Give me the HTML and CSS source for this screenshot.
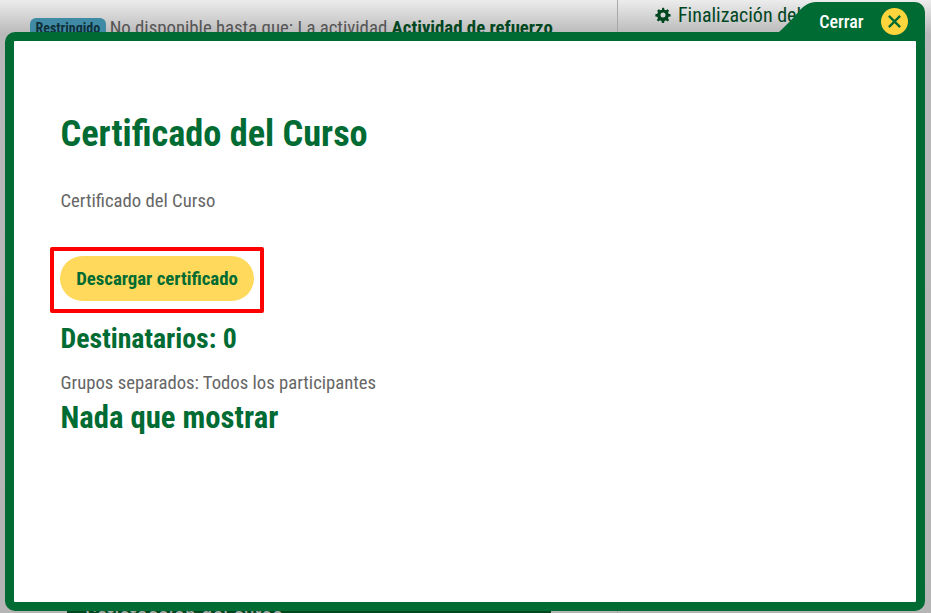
FILE: index.html
```html
<!DOCTYPE html>
<html lang="es">
<head>
  <meta charset="UTF-8" />
  <meta name="viewport" content="width=device-width, initial-scale=1" />
  <title>Certificado del Curso</title>
  <link rel="stylesheet" href="styles.css">
</head>
<body>
  <!-- Page behind the modal -->
  <div class="page">
    <div class="page-main">
      <div class="availability">
        <span class="badge">Restringido</span>
        <span>No disponible hasta que: La actividad <strong>Actividad de refuerzo</strong></span>
      </div>
      <div class="page-footer-bar">Satisfacción del curso</div>
    </div>
    <aside class="page-side">
      <div class="side-title">
        <svg class="gear" viewBox="0 0 24 24" aria-hidden="true"><path d="M13.6 1l.5 3a8.300 8.300 0 0 1 2.300 1l2.500-1.800 2.300 2.300-1.800 2.500c.4.700.8 1.500 1 2.300l3 .5v3.300l-3 .5a8.300 8.300 0 0 1-1 2.300l1.800 2.500-2.300 2.300-2.500-1.800c-.7.4-1.500.8-2.300 1l-.5 3h-3.300l-.5-3a8.300 8.300 0 0 1-2.300-1l-2.500 1.800-2.300-2.300 1.800-2.500a8.300 8.300 0 0 1-1-2.300l-3-.5v-3.300l3-.5c.2-.8.6-1.600 1-2.300L3.300 5.500l2.300-2.300 2.500 1.800c.7-.4 1.500-.8 2.300-1l.5-3zM12 8.200a3.800 3.800 0 1 0 0 7.600 3.800 3.800 0 0 0 0-7.600z" fill-rule="evenodd"/></svg>
        <span>Finalización del curso</span>
      </div>
    </aside>
  </div>

  <!-- Modal -->
  <div class="modal">
    <button class="close-tab">
      <svg class="tab-shape" viewBox="0 0 146 39" aria-hidden="true"><path d="M0 30C8 23 15 15 21 8 25 4 30 0 37 0H136a10 10 0 0 1 10 10V39H0z"/></svg>
      <span class="close-label">Cerrar</span>
      <span class="close-icon">
        <svg viewBox="0 0 16 16" aria-hidden="true"><path d="M2 2l12 12M14 2L2 14"/></svg>
      </span>
    </button>
    <div class="modal-body">
      <h1>Certificado del Curso</h1>
      <p class="intro">Certificado del Curso</p>
      <div class="download-row">
        <a class="download-btn" href="#">Descargar certificado</a>
      </div>
      <h2 class="recipients">Destinatarios: 0</h2>
      <p class="groups">Grupos separados: Todos los participantes</p>
      <h2 class="empty">Nada que mostrar</h2>
    </div>
  </div>
</body>
</html>
```

FILE: styles.css
```css
html, body {
  height: 100%;
}

body {
  margin: 0;
  overflow: hidden;
  font-family: 'Roboto', 'Liberation Sans', sans-serif;
  font-stretch: 75%;
  color: #5f5f5f;
  background-color: #b5b5b5;
}

/* Page behind the modal, runs past the bottom of the window */
.page {
  height: 640px;
  display: flex;
  background: linear-gradient(#ececec 0, #b9b9b9 34px, #b5b5b5 100%);
}

.page-main {
  width: 618px;
  box-sizing: border-box;
  padding: 17px 0 0 30px;
  border-right: 1px solid #a8a8a8;
  display: flex;
  flex-direction: column;
  justify-content: space-between;
}

.availability {
  display: flex;
  align-items: center;
  gap: 4px;
  font-size: 18.800px;
  line-height: 22px;
  color: #555;
}

.availability strong {
  color: #00461f;
}

.badge {
  background-color: #3f8ba6;
  color: #10303a;
  font-size: 14px;
  font-weight: 700;
  line-height: 20px;
  padding: 0 5.500px;
  border-radius: 6px;
}

.page-footer-bar {
  margin-left: 37px;
  width: 484px;
  height: 38px;
  box-sizing: border-box;
  padding: 4px 0 0 18px;
  background-color: #00461f;
  color: #aaa;
  font-size: 22.600px;
  line-height: 20px;
}

.page-side {
  flex: 1;
  padding: 4px 0 0 37px;
}

.side-title {
  display: flex;
  align-items: center;
  gap: 7px;
  font-size: 20px;
  line-height: 22px;
  color: #00461f;
  white-space: nowrap;
}

.gear {
  width: 16px;
  height: 16px;
  fill: #00461f;
}

/* Modal */
.modal {
  position: absolute;
  left: 5px;
  top: 32px;
  width: 920px;
  height: 579px;
  box-sizing: border-box;
  border: 9px solid #006b33;
  border-radius: 10px;
  background-color: #fff;
}

.close-tab {
  position: absolute;
  right: -9px;
  top: -39px;
  width: 146px;
  height: 39px;
  box-sizing: border-box;
  padding: 0 17px 0 0;
  border: none;
  background: none;
  color: #fff;
  font-family: inherit;
  font-stretch: inherit;
  font-size: 18px;
  font-weight: 500;
  display: flex;
  align-items: center;
  justify-content: flex-end;
  gap: 17.500px;
}

.tab-shape {
  position: absolute;
  left: 0;
  top: 0;
  width: 146px;
  height: 39px;
  fill: #006b33;
}

.close-label, .close-icon {
  position: relative;
}

.close-icon {
  width: 27px;
  height: 27px;
  border-radius: 50%;
  background-color: #ffd53d;
  display: flex;
  align-items: center;
  justify-content: center;
}

.close-icon svg {
  width: 15px;
  height: 15px;
  fill: none;
  stroke: #006b33;
  stroke-width: 2.500;
}

.modal-body {
  padding: 73px 47px 0 46.500px;
}

h1 {
  margin: 0;
  font-size: 36.300px;
  line-height: 40px;
  font-weight: 700;
  color: #006b33;
}

h2 {
  margin: 0;
  font-weight: 700;
  color: #006b33;
}

.intro, .groups {
  margin: 0;
  font-size: 18.700px;
  line-height: 22px;
  color: #666;
}

.intro {
  margin-top: 36px;
}

/* Red highlight round the button */
.download-row {
  margin: 35px 0 0 -10.500px;
  width: 214px;
  height: 66px;
  box-sizing: border-box;
  border: 4px solid #f00;
  border-radius: 2px;
  padding: 5px 6px;
}

.download-btn {
  display: flex;
  align-items: center;
  justify-content: center;
  width: 194px;
  height: 45px;
  border-radius: 23px;
  background-color: #ffd95c;
  color: #006b33;
  font-size: 18.800px;
  font-weight: 700;
  text-decoration: none;
}

.recipients {
  margin-top: 10px;
  font-size: 27.800px;
  line-height: 32px;
}

.groups {
  margin-top: 17px;
}

.empty {
  margin-top: 1px;
  font-size: 30.700px;
  line-height: 46px;
}
```
